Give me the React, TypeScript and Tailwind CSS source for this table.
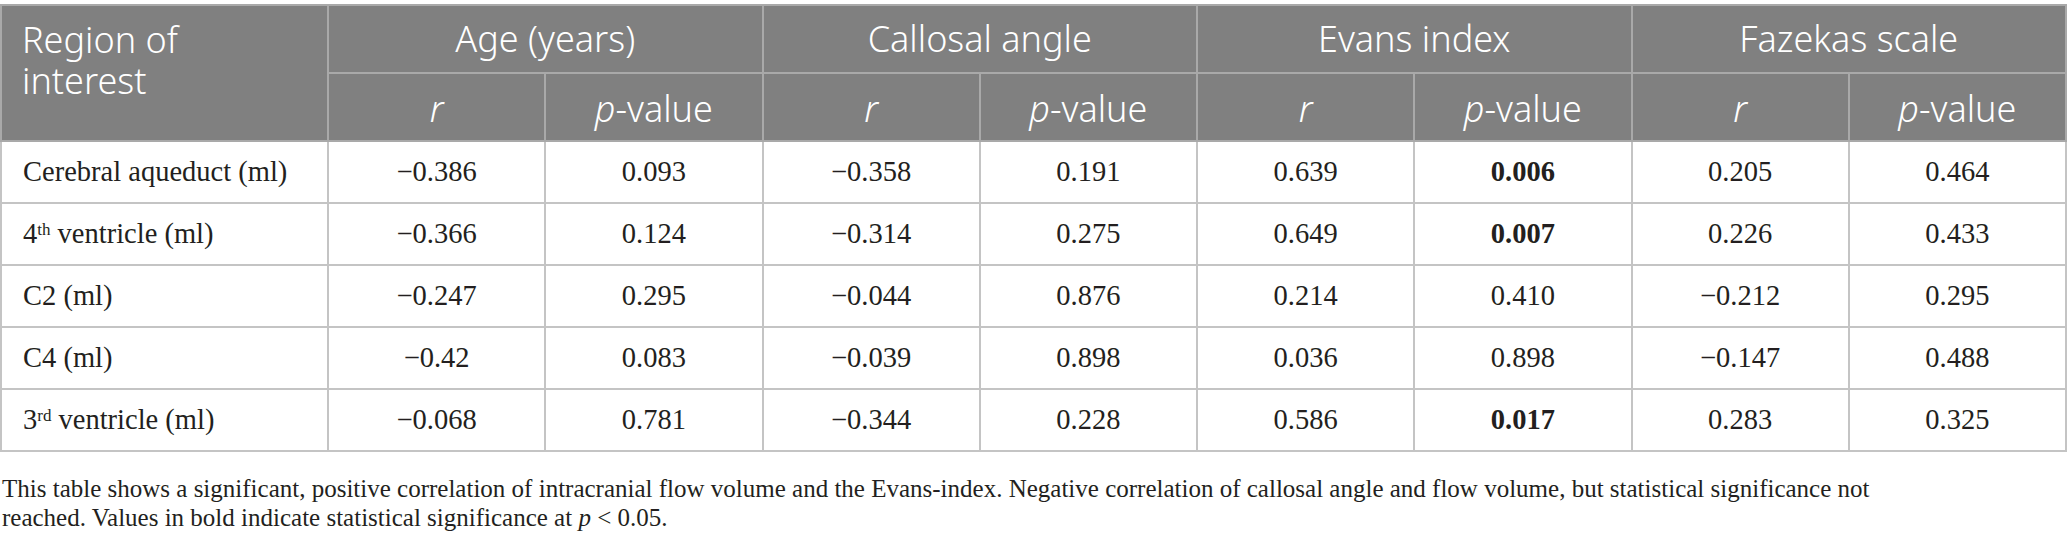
import React from "react";

type Cell = { v: string; b?: boolean };
type Row = { label: React.ReactNode; cells: Cell[] };

const rows: Row[] = [
  {
    label: "Cerebral aqueduct (ml)",
    cells: [
      { v: "\u22120.386" }, { v: "0.093" },
      { v: "\u22120.358" }, { v: "0.191" },
      { v: "0.639" }, { v: "0.006", b: true },
      { v: "0.205" }, { v: "0.464" },
    ],
  },
  {
    label: (
      <>
        4<sup className="text-[17px]">th</sup> ventricle (ml)
      </>
    ),
    cells: [
      { v: "\u22120.366" }, { v: "0.124" },
      { v: "\u22120.314" }, { v: "0.275" },
      { v: "0.649" }, { v: "0.007", b: true },
      { v: "0.226" }, { v: "0.433" },
    ],
  },
  {
    label: "C2 (ml)",
    cells: [
      { v: "\u22120.247" }, { v: "0.295" },
      { v: "\u22120.044" }, { v: "0.876" },
      { v: "0.214" }, { v: "0.410" },
      { v: "\u22120.212" }, { v: "0.295" },
    ],
  },
  {
    label: "C4 (ml)",
    cells: [
      { v: "\u22120.42" }, { v: "0.083" },
      { v: "\u22120.039" }, { v: "0.898" },
      { v: "0.036" }, { v: "0.898" },
      { v: "\u22120.147" }, { v: "0.488" },
    ],
  },
  {
    label: (
      <>
        3<sup className="text-[17px]">rd</sup> ventricle (ml)
      </>
    ),
    cells: [
      { v: "\u22120.068" }, { v: "0.781" },
      { v: "\u22120.344" }, { v: "0.228" },
      { v: "0.586" }, { v: "0.017", b: true },
      { v: "0.283" }, { v: "0.325" },
    ],
  },
];

const groups = ["Age (years)", "Callosal angle", "Evans index", "Fazekas scale"];

const sans = "font-['Noto_Sans','Open_Sans',sans-serif]";
const serif = "font-['Liberation_Serif','Times_New_Roman',serif]";

function SubHeads() {
  return (
    <>
      {groups.map((g) => (
        <React.Fragment key={g}>
          <th className="border-2 border-[#a9a9a9] font-light text-center pt-[4px]">
            <i>r</i>
          </th>
          <th className="border-2 border-[#a9a9a9] font-light text-center pt-[4px]">
            <i>p</i>-value
          </th>
        </React.Fragment>
      ))}
    </>
  );
}

export default function App() {
  return (
    <div className="w-[2067px] bg-white pt-[4px]">
      <table className="w-full table-fixed border-collapse border-2 border-[#c4c4c4]">
        <colgroup>
          <col className="w-[327px]" />
          {Array.from({ length: 8 }, (_, i) => (
            <col key={i} />
          ))}
        </colgroup>
        <thead className={`bg-[#808080] text-white text-[36px] ${sans}`}>
          <tr className="h-[68px]">
            <th
              rowSpan={2}
              className="border-2 border-[#a9a9a9] align-top text-left font-light leading-[41px] pl-[20px] pt-[13px]"
            >
              Region of
              <br />
              interest
            </th>
            {groups.map((g) => (
              <th key={g} colSpan={2} className="border-2 border-[#a9a9a9] font-light text-center">
                {g}
              </th>
            ))}
          </tr>
          <tr className="h-[68px]">
            <SubHeads />
          </tr>
        </thead>
        <tbody className={`text-[28.5px] text-[#231f20] ${serif}`}>
          {rows.map((r, i) => (
            <tr key={i} className="h-[62px]">
              <td className="border-2 border-[#c4c4c4] pl-[21px] pt-[1px]">{r.label}</td>
              {r.cells.map((c, j) => (
                <td
                  key={j}
                  className={`border-2 border-[#c4c4c4] text-center pt-[1px] ${c.b ? "font-bold" : ""}`}
                >
                  {c.v}
                </td>
              ))}
            </tr>
          ))}
        </tbody>
      </table>
      <p className={`mt-[22px] pl-[2px] pr-[165px] text-[25px] leading-[29px] text-[#231f20] ${serif}`}>
        This table shows a significant, positive correlation of intracranial flow volume and the
        Evans-index. Negative correlation of callosal angle and flow volume, but statistical
        significance not reached. Values in bold indicate statistical significance at <i>p</i> &lt; 0.05.
      </p>
    </div>
  );
}
